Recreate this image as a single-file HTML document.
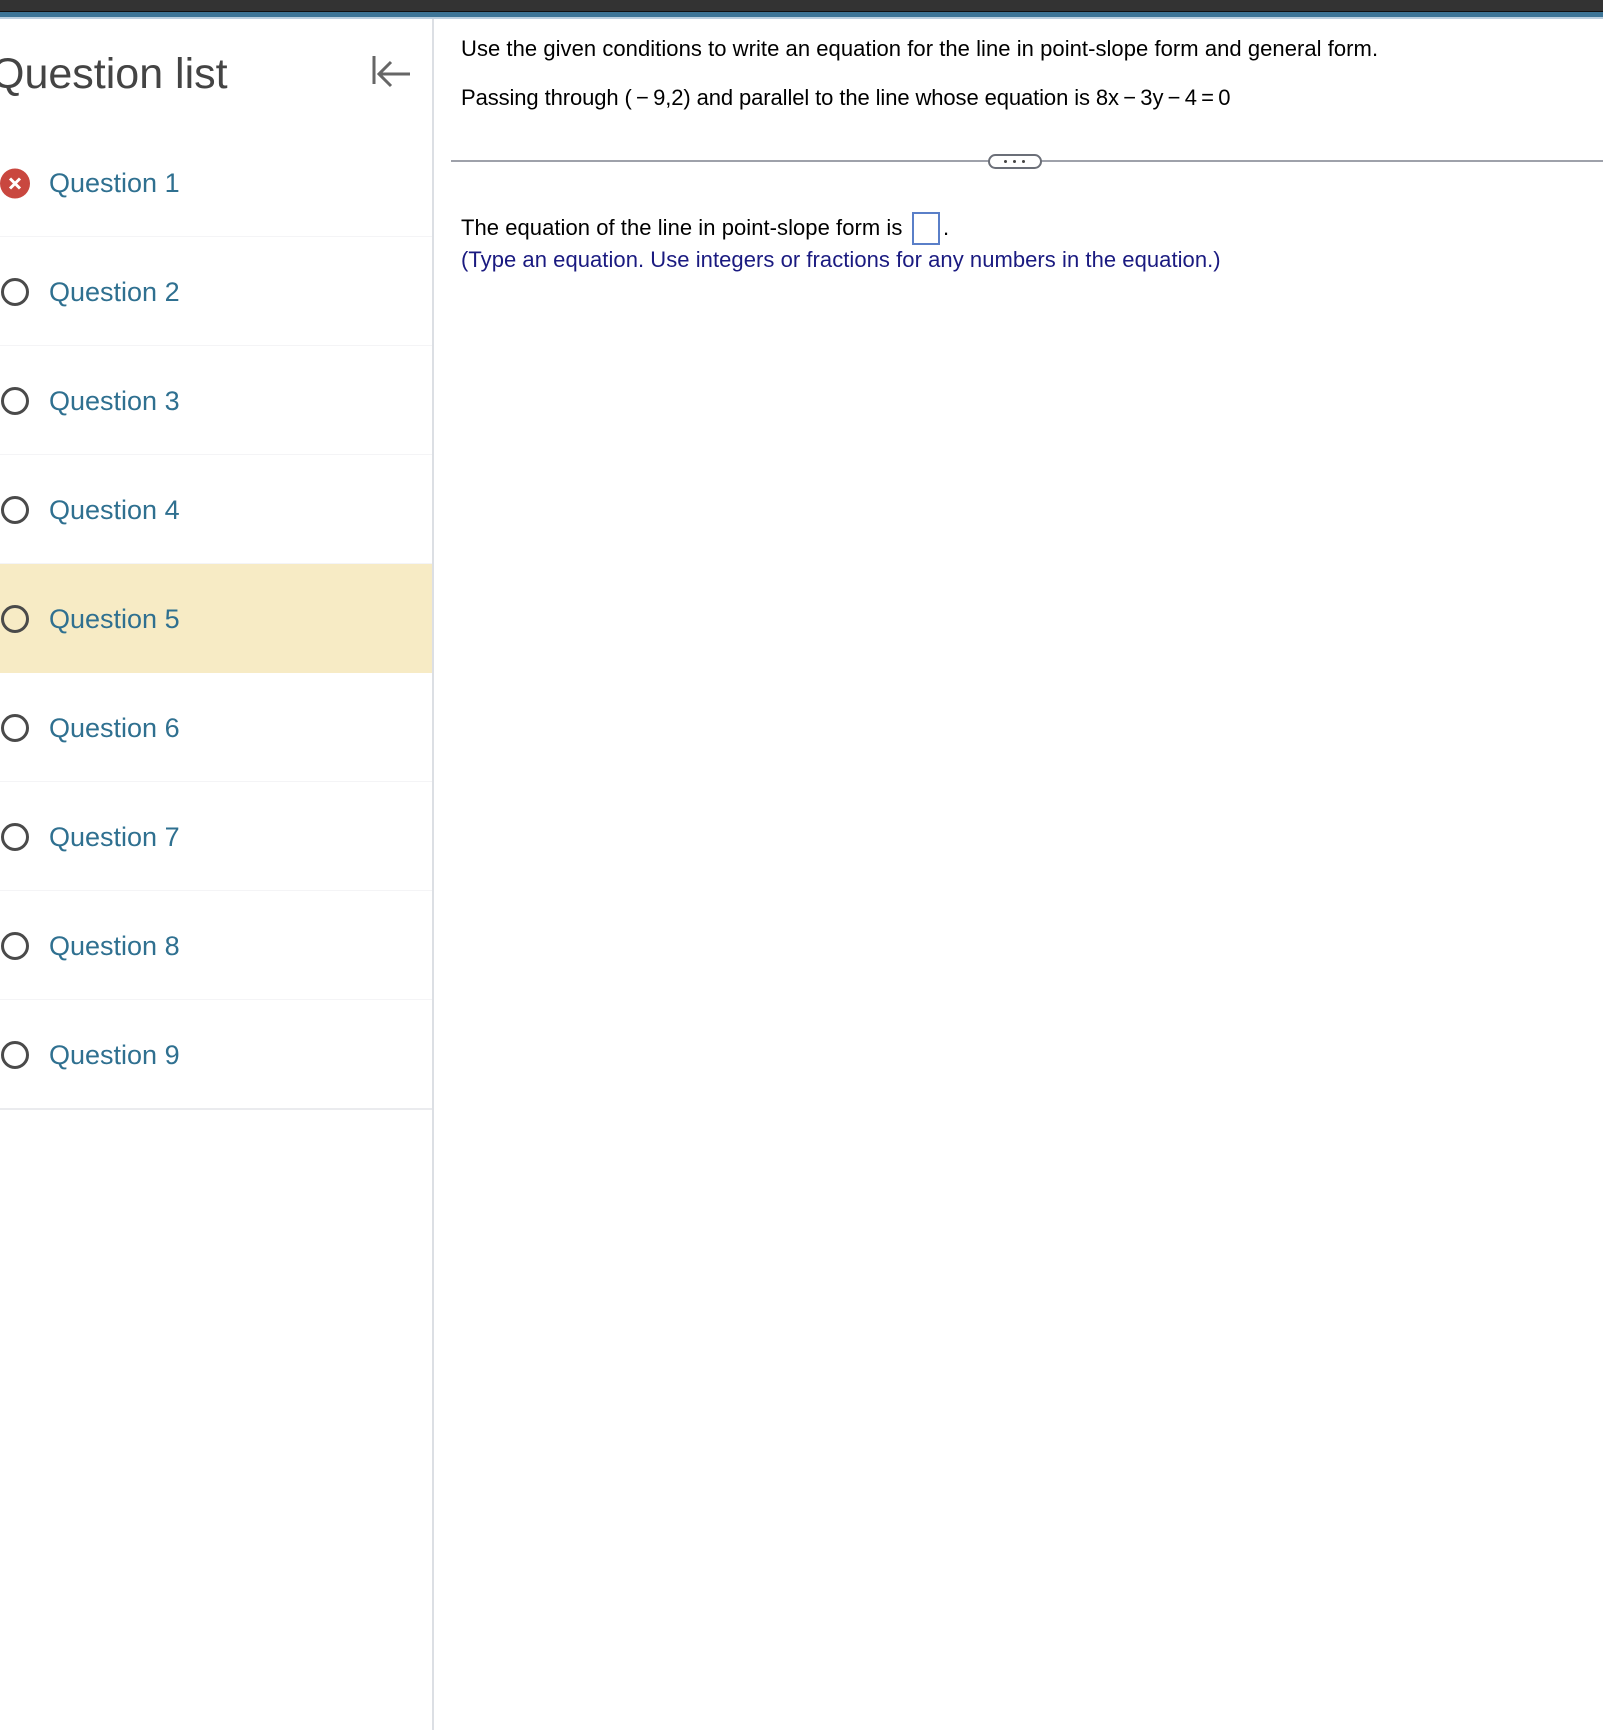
<!DOCTYPE html>
<html><head><meta charset="utf-8"><style>
*{margin:0;padding:0;box-sizing:border-box}
body{width:1603px;height:1730px;background:#fff;position:relative;overflow:hidden;font-family:"Liberation Sans",Arial,sans-serif}
.a{position:absolute;white-space:nowrap;line-height:1}
.row{position:absolute;left:0;width:432px;height:109px;border-bottom:1px solid #f4f4f6}
.row .t{position:absolute;left:49px;top:42px;font-size:27px;line-height:1;color:#2f7090}
.row .c{position:absolute;left:1px;top:41px;width:28px;height:28px;border:3px solid #4a4a4a;border-radius:50%}
.m{font-size:22px;color:#000;letter-spacing:0.05px}
</style></head><body>
<div class="a" style="left:0;top:0;width:1603px;height:11px;background:#333"></div>
<div class="a" style="left:0;top:11px;width:1603px;height:1px;background:#111"></div>
<div class="a" style="left:0;top:12px;width:1603px;height:5px;background:#3d7597"></div>
<div class="a" style="left:0;top:17px;width:1603px;height:2px;background:#bcd0e0"></div>
<div class="a" style="left:432px;top:19px;width:2px;height:1711px;background:#dcdfe4"></div>

<div class="a" style="left:-9px;top:53px;font-size:43px;color:#444">Question list</div>
<svg class="a" style="left:365px;top:51px" width="50" height="40" viewBox="0 0 50 40">
<path d="M9 5V33M14 23H45M26 11L14 23L26 35" stroke="#666" stroke-width="3" fill="none"/>
</svg>

<div class="row" style="top:128px"><svg style="position:absolute;left:0;top:40px" width="31" height="31"><circle cx="15" cy="15.5" r="15" fill="#c9473f"/><path d="M10 10.5L20 20.5M20 10.5L10 20.5" stroke="#fff" stroke-width="3"/></svg><div class="t">Question 1</div></div>
<div class="row" style="top:237px"><div class="c"></div><div class="t">Question 2</div></div>
<div class="row" style="top:346px"><div class="c"></div><div class="t">Question 3</div></div>
<div class="row" style="top:455px"><div class="c"></div><div class="t">Question 4</div></div>
<div class="row" style="top:564px;background:#f7ebc5;border-bottom:none"><div class="c"></div><div class="t">Question 5</div></div>
<div class="row" style="top:673px"><div class="c"></div><div class="t">Question 6</div></div>
<div class="row" style="top:782px"><div class="c"></div><div class="t">Question 7</div></div>
<div class="row" style="top:891px"><div class="c"></div><div class="t">Question 8</div></div>
<div class="row" style="top:1000px;height:110px;border-bottom:2px solid #eaebee"><div class="c"></div><div class="t">Question 9</div></div>

<div class="a m" style="left:461px;top:38px">Use the given conditions to write an equation for the line in point-slope form and general form.</div>
<div class="a m" style="left:461px;top:87px;letter-spacing:-0.1px">Passing through (&#8201;−&#8201;9,2) and parallel to the line whose equation is 8x&#8201;−&#8201;3y&#8201;−&#8201;4&#8201;=&#8201;0</div>

<div class="a" style="left:451px;top:160px;width:1152px;height:2px;background:#9ea1aa"></div>
<div class="a" style="left:988px;top:154px;width:54px;height:15px;border:2px solid #6b6f78;border-radius:8px;background:#fff"></div>
<div class="a" style="left:1004px;top:160px;width:3px;height:3px;background:#444;border-radius:50%"></div>
<div class="a" style="left:1013px;top:160px;width:3px;height:3px;background:#444;border-radius:50%"></div>
<div class="a" style="left:1022px;top:160px;width:3px;height:3px;background:#444;border-radius:50%"></div>

<div class="a m" style="left:461px;top:217px">The equation of the line in point-slope form is</div>
<div class="a" style="left:912px;top:212px;width:28px;height:33px;border:2px solid #5a7fc8"></div>
<div class="a m" style="left:943px;top:217px">.</div>
<div class="a m" style="left:461px;top:249px;color:#1a1a80">(Type an equation. Use integers or fractions for any numbers in the equation.)</div>
</body></html>
